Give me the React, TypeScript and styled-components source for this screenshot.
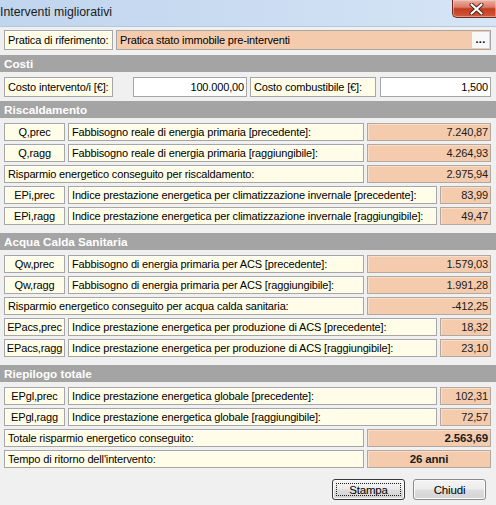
import React from 'react';
import styled, { createGlobalStyle } from 'styled-components';

const Global = createGlobalStyle`
  html, body { margin: 0; padding: 0; background: #f0f0f0; }
  body { width: 496px; height: 505px; overflow: hidden; }
  * { box-sizing: border-box; }
`;

const Window = styled.div`
  width: 496px;
  height: 505px;
  background: #f0f0f0;
  display: flex;
  flex-direction: column;
  font-family: "Liberation Sans", Arial, sans-serif;
  font-size: 11px;
  letter-spacing: -0.15px;
  color: #000;
  overflow: hidden;
`;

const TitleBar = styled.div`
  height: 27px;
  flex: none;
  display: flex;
  align-items: flex-start;
  background: linear-gradient(90deg, #c0d5ee 0%, #c9dbf1 45%, #d6e5f6 100%);
  border-bottom: 1px solid #b7c8dd;
`;

const Title = styled.span`
  flex: 1;
  padding: 5px 0 0 0;
  font-size: 12.3px;
  letter-spacing: 0;
  color: #1b1b1b;
`;

const CloseButton = styled.div`
  width: 44px;
  height: 18px;
  display: flex;
  align-items: center;
  justify-content: center;
  border: 1px solid #6e2b1f;
  border-top: none;
  border-right: none;
  border-radius: 0 0 0 5px;
  background: linear-gradient(#eab0a2 0%, #dc7b66 42%, #c43c22 52%, #cf5a3d 100%);
  box-shadow: inset 0 0 0 1px rgba(255, 220, 210, 0.45);
  padding-left: 4px;
`;

const Content = styled.div`
  display: flex;
  flex-direction: column;
`;

const SectionHeader = styled.div<{ $mt?: number }>`
  height: 17px;
  margin-top: ${p => p.$mt ?? 0}px;
  display: flex;
  align-items: center;
  padding-left: 4px;
  background: #a4a4a4;
  color: #fff;
  font-weight: bold;
  font-size: 11.7px;
  letter-spacing: 0;
`;

const Rows = styled.div<{ $pt: number; $pb: number }>`
  display: flex;
  flex-direction: column;
  gap: 3px;
  padding: ${p => p.$pt}px 5px ${p => p.$pb}px 4px;
`;

const Row = styled.div<{ $h?: number }>`
  display: flex;
  gap: 3px;
  height: ${p => p.$h ?? 18}px;
`;

type Tone = 'label' | 'value' | 'input';

const toneBg: Record<Tone, string> = {
  label: '#fffde8',
  value: '#f4cbad',
  input: '#ffffff',
};

const Cell = styled.div<{
  $tone: Tone;
  $w?: number;
  $ml?: number;
  $align?: 'left' | 'center' | 'right';
  $bold?: boolean;
}>`
  ${p => (p.$w ? `width: ${p.$w}px; flex: none;` : 'flex: 1; min-width: 0;')}
  margin-left: ${p => p.$ml ?? 0}px;
  height: 100%;
  display: flex;
  align-items: center;
  justify-content: ${p =>
    p.$align === 'center' ? 'center' : p.$align === 'right' ? 'flex-end' : 'flex-start'};
  padding: 0 ${p => (p.$align === 'right' ? 2 : 3)}px;
  background: ${p => toneBg[p.$tone]};
  border: 1px solid ${p => (p.$tone === 'value' ? '#b3a89f' : '#a6a6a6')};
  box-shadow: inset 1px 1px 0 ${p => (p.$tone === 'value' ? 'rgba(255,255,255,0.35)' : '#ffffff')};
  white-space: nowrap;
  overflow: hidden;
  font-weight: ${p => (p.$bold ? 'bold' : 'normal')};
  font-size: ${p => (p.$bold ? '11.5px' : 'inherit')};
  color: ${p => (p.$tone === 'value' ? '#1c1c1c' : '#000')};
`;

const LookupField = styled.div`
  flex: 1;
  height: 100%;
  display: flex;
  align-items: stretch;
  background: #f4cbad;
  border: 1px solid #a6a6a6;
`;

const LookupText = styled.span`
  flex: 1;
  display: flex;
  align-items: center;
  padding-left: 3px;
  white-space: nowrap;
`;

const LookupButton = styled.span`
  width: 17px;
  margin: 1px;
  display: flex;
  align-items: center;
  justify-content: center;
  background: #f8f8f8;
  font-weight: bold;
  font-size: 11px;
  letter-spacing: 0.3px;
  padding-bottom: 3px;
`;

const ButtonBar = styled.div`
  display: flex;
  justify-content: flex-end;
  gap: 8px;
  padding: 11px 10px 0 0;
`;

const Button = styled.div<{ $default?: boolean }>`
  width: 73px;
  height: 21px;
  display: flex;
  align-items: center;
  justify-content: center;
  position: relative;
  border: 1px solid ${p => (p.$default ? '#3a3a3a' : '#8a8a8a')};
  border-radius: 3px;
  background: linear-gradient(#f4f4f4 0%, #ececec 48%, #dedede 52%, #d3d3d3 100%);
  box-shadow: inset 0 0 0 1px #fcfcfc;
  font-size: 11.5px;
  color: #000;
`;

const FocusRing = styled.span`
  position: absolute;
  inset: 3px;
  border: 1px dotted #222;
  pointer-events: none;
`;

type DataRow =
  | { kind: 'coded'; code: string; desc: string; value: string; narrow?: boolean }
  | { kind: 'wide'; label: string; value: string; bold?: boolean; center?: boolean };

const riscaldamento: DataRow[] = [
  { kind: 'coded', code: 'Q,prec', desc: 'Fabbisogno reale di energia primaria [precedente]:', value: '7.240,87' },
  { kind: 'coded', code: 'Q,ragg', desc: 'Fabbisogno reale di energia primaria [raggiungibile]:', value: '4.264,93' },
  { kind: 'wide', label: 'Risparmio energetico conseguito per riscaldamento:', value: '2.975,94' },
  { kind: 'coded', code: 'EPi,prec', desc: 'Indice prestazione energetica per climatizzazione invernale [precedente]:', value: '83,99', narrow: true },
  { kind: 'coded', code: 'EPi,ragg', desc: 'Indice prestazione energetica per climatizzazione invernale [raggiungibile]:', value: '49,47', narrow: true },
];

const acs: DataRow[] = [
  { kind: 'coded', code: 'Qw,prec', desc: 'Fabbisogno di energia primaria per ACS [precedente]:', value: '1.579,03' },
  { kind: 'coded', code: 'Qw,ragg', desc: 'Fabbisogno di energia primaria per ACS [raggiungibile]:', value: '1.991,28' },
  { kind: 'wide', label: 'Risparmio energetico conseguito per acqua calda sanitaria:', value: '-412,25' },
  { kind: 'coded', code: 'EPacs,prec', desc: 'Indice prestazione energetica per produzione di ACS [precedente]:', value: '18,32', narrow: true },
  { kind: 'coded', code: 'EPacs,ragg', desc: 'Indice prestazione energetica per produzione di ACS [raggiungibile]:', value: '23,10', narrow: true },
];

const riepilogo: DataRow[] = [
  { kind: 'coded', code: 'EPgl,prec', desc: 'Indice prestazione energetica globale [precedente]:', value: '102,31', narrow: true },
  { kind: 'coded', code: 'EPgl,ragg', desc: 'Indice prestazione energetica globale [raggiungibile]:', value: '72,57', narrow: true },
  { kind: 'wide', label: 'Totale risparmio energetico conseguito:', value: '2.563,69', bold: true },
  { kind: 'wide', label: "Tempo di ritorno dell'intervento:", value: '26 anni', bold: true, center: true },
];

function DataRows({ rows }: { rows: DataRow[] }) {
  return (
    <>
      {rows.map((r, i) =>
        r.kind === 'coded' ? (
          <Row key={i}>
            <Cell $tone="label" $w={61} $align="center">{r.code}</Cell>
            <Cell $tone="label">{r.desc}</Cell>
            <Cell $tone="value" $w={r.narrow ? 51 : 124} $align="right">{r.value}</Cell>
          </Row>
        ) : (
          <Row key={i}>
            <Cell $tone="label">{r.label}</Cell>
            <Cell $tone="value" $w={124} $align={r.center ? 'center' : 'right'} $bold={r.bold}>
              {r.value}
            </Cell>
          </Row>
        )
      )}
    </>
  );
}

export default function App() {
  return (
    <Window>
      <Global />
      <TitleBar>
        <Title>Interventi migliorativi</Title>
        <CloseButton>
          <svg width="15" height="12" viewBox="0 0 15 12">
            <path d="M2.5 1.5 L12.5 10.5 M12.5 1.5 L2.5 10.5" stroke="#4a1f18" strokeWidth="4" strokeLinecap="round" />
            <path d="M2.5 1.5 L12.5 10.5 M12.5 1.5 L2.5 10.5" stroke="#ffffff" strokeWidth="2.2" strokeLinecap="round" />
          </svg>
        </CloseButton>
      </TitleBar>
      <Content>
        <Rows $pt={3} $pb={0}>
          <Row $h={20}>
            <Cell $tone="label" $w={109}>Pratica di riferimento:</Cell>
            <LookupField>
              <LookupText>Pratica stato immobile pre-interventi</LookupText>
              <LookupButton>...</LookupButton>
            </LookupField>
          </Row>
        </Rows>

        <SectionHeader $mt={5}>Costi</SectionHeader>
        <Rows $pt={5} $pb={4}>
          <Row $h={20}>
            <Cell $tone="label" $w={109}>Costo intervento/i [€]:</Cell>
            <Cell $tone="input" $w={114} $ml={17} $align="right">100.000,00</Cell>
            <Cell $tone="label" $w={126}>Costo combustibile [€]:</Cell>
            <Cell $tone="input" $ml={1} $align="right">1,500</Cell>
          </Row>
        </Rows>

        <SectionHeader>Riscaldamento</SectionHeader>
        <Rows $pt={5} $pb={8}>
          <DataRows rows={riscaldamento} />
        </Rows>

        <SectionHeader>Acqua Calda Sanitaria</SectionHeader>
        <Rows $pt={5} $pb={8}>
          <DataRows rows={acs} />
        </Rows>

        <SectionHeader>Riepilogo totale</SectionHeader>
        <Rows $pt={5} $pb={0}>
          <DataRows rows={riepilogo} />
        </Rows>

        <ButtonBar>
          <Button $default>
            <FocusRing />
            Stampa
          </Button>
          <Button>Chiudi</Button>
        </ButtonBar>
      </Content>
    </Window>
  );
}
